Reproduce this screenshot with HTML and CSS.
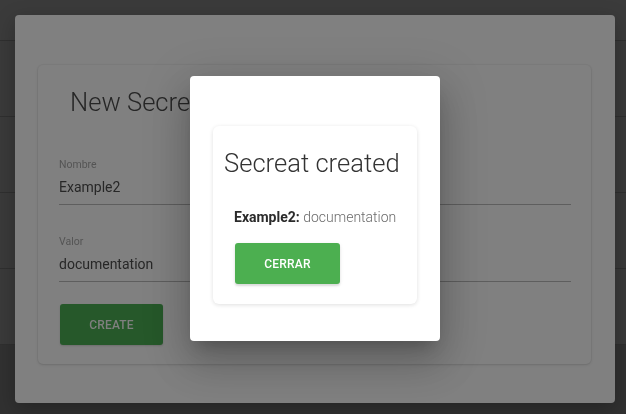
FILE: index.html
```html
<!DOCTYPE html>
<html lang="es">
<head>
<meta charset="utf-8">
<title>Secrets</title>
<link rel="stylesheet" href="styles.css">
</head>
<body>
<div class="page">
  <div class="row row-head"></div>
  <div class="row"></div>
  <div class="row"></div>
  <div class="row"></div>
  <div class="row"></div>
</div>

<div class="modal modal-back">
  <div class="card card-form">
    <h1 class="card-title title-form">New Secret</h1>
    <div class="field">
      <label class="field-label">Nombre</label>
      <div class="field-input">Example2</div>
    </div>
    <div class="field">
      <label class="field-label">Valor</label>
      <div class="field-input">documentation</div>
    </div>
    <button class="btn btn-create">CREATE</button>
  </div>
</div>

<div class="modal modal-front">
  <div class="card card-result">
    <h2 class="card-title title-result">Secreat created</h2>
    <p class="result"><strong>Example2:</strong> <span class="result-value">documentation</span></p>
    <button class="btn btn-close">CERRAR</button>
  </div>
</div>
</body>
</html>
```

FILE: styles.css
```css
* { box-sizing: border-box; }
html, body {
  margin: 0;
  padding: 0;
  height: 100%;
}
body {
  background: #313131;
  font-family: Roboto, "Liberation Sans", sans-serif;
  overflow: hidden;
}
.page {
  display: flex;
  flex-direction: column;
}
.row {
  height: 76px;
  background: #3a3a3a;
  border-bottom: 1px solid #2f2f2f;
}
.row-head {
  height: 41px;
  background: #3b3b3b;
}

.modal {
  position: fixed;
  border-radius: 4px;
}
.modal-back {
  left: 15px;
  top: 15px;
  width: 600px;
  height: 388px;
  background: #808080;
  padding: 50px 23px 0 23px;
  box-shadow: 0 6px 20px rgba(0,0,0,0.25);
}
.modal-front {
  left: 190px;
  top: 76px;
  width: 250px;
  height: 265px;
  background: #ffffff;
  padding: 50px 23px 0 23px;
  box-shadow: 0 24px 38px 3px rgba(0,0,0,0.14), 0 9px 46px 8px rgba(0,0,0,0.12), 0 11px 15px -7px rgba(0,0,0,0.2);
}

.card {
  border-radius: 5px;
  padding: 21px 20px 0 21px;
}
.card-form {
  width: 553px;
  height: 299px;
  background: #808080;
  box-shadow: 0 1px 3px rgba(0,0,0,0.12), 0 0 0 1px rgba(0,0,0,0.03);
}
.card-result {
  width: 204px;
  height: 178px;
  background: #ffffff;
  box-shadow: 0 1px 4px rgba(0,0,0,0.13);
  border-radius: 6px;
}

.card-title {
  margin: 0;
  font-weight: 300;
  font-size: 25.6px;
  line-height: 32px;
}
.title-form {
  color: #262626;
  padding-left: 11px;
  margin-bottom: 40px;
  white-space: nowrap;
}
.title-result {
  color: #333333;
  margin-left: -10px;
  margin-bottom: 28px;
  white-space: nowrap;
}

.field {
  display: flex;
  flex-direction: column;
  margin-bottom: 30px;
}
.field-label {
  font-size: 10.5px;
  line-height: 13px;
  color: #545454;
  margin-bottom: 6px;
}
.field-input {
  font-size: 14px;
  line-height: 20px;
  color: #272727;
  padding-bottom: 7px;
  border-bottom: 1px solid #5e5e5e;
}
.field:nth-of-type(2) {
  margin-bottom: 22px;
}

.btn {
  display: flex;
  align-items: center;
  justify-content: center;
  border: none;
  border-radius: 3px;
  font-family: Roboto, "Liberation Sans", sans-serif;
  font-weight: 500;
  font-size: 12px;
  letter-spacing: 0.2px;
  height: 41px;
  padding: 0;
}
.btn-create {
  width: 103px;
  margin-left: 1px;
  background: #26582a;
  color: #7f7f7f;
  box-shadow: 0 1px 2px rgba(0,0,0,0.15);
}
.btn-close {
  width: 105px;
  margin-left: 1px;
  background: #4caf50;
  color: #ffffff;
  box-shadow: 0 2px 2px rgba(0,0,0,0.1), 0 1px 4px rgba(0,0,0,0.08);
}

.result {
  margin: 0 0 16px 0;
  font-size: 14px;
  line-height: 20px;
  color: #222222;
  white-space: nowrap;
}
.result strong {
  font-weight: 700;
  color: #2b2b2b;
}
.result-value {
  font-weight: 300;
  color: #6b6b6b;
}
```
